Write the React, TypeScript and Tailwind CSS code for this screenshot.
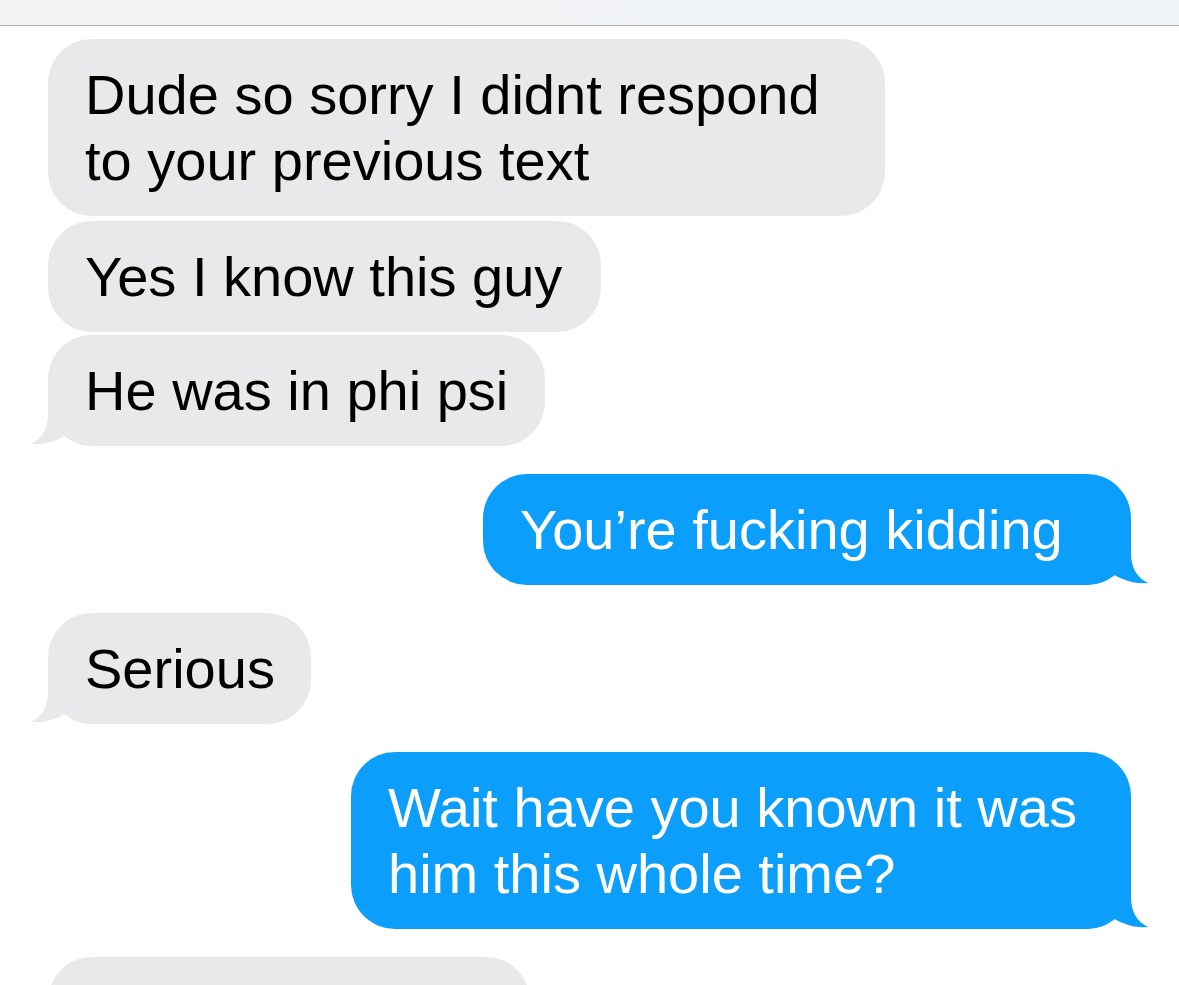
type Msg = { text: string[]; me?: boolean; w: string; mt: string; tail?: boolean };

const msgs: Msg[] = [
  { text: ['Dude so sorry I didnt respond', 'to your previous text'], w: 'w-[837px]', mt: 'mt-[13px]' },
  { text: ['Yes I know this guy'], w: 'w-[553px]', mt: 'mt-[5px]' },
  { text: ['He was in phi psi'], w: 'w-[497px]', mt: 'mt-[3px]', tail: true },
  { text: ['You\u2019re fucking kidding'], me: true, w: 'w-[648px]', mt: 'mt-[28px]', tail: true },
  { text: ['Serious'], w: 'w-[263px]', mt: 'mt-[28px]', tail: true },
  { text: ['Wait have you known it was', 'him this whole time?'], me: true, w: 'w-[780px]', mt: 'mt-[28px]', tail: true },
  { text: ['\u00a0'], w: 'w-[482px]', mt: 'mt-[28px]' },
];

function Tail({ me }: { me?: boolean }) {
  return (
    <svg
      viewBox="0 0 80 50"
      className={
        me
          ? 'absolute bottom-0 right-[-17px] w-[80px] h-[50px] -scale-x-100 fill-[#0b9efb]'
          : 'absolute bottom-0 left-[-17px] w-[80px] h-[50px] fill-[#e9e9eb]'
      }
    >
      <path d="M17 0 L17 18 C17 32 12 42 0 48 C14 49.5 28 44 37 38 C44 46 52 50 66 50 L80 50 L80 0 Z" />
    </svg>
  );
}

export default function App() {
  return (
    <div className="h-[985px] overflow-hidden bg-white font-['Liberation_Sans',Arial,sans-serif]">
      <div className="h-[26px] bg-gradient-to-r from-[#f3f4f5] to-[#f1f5f8] border-b border-[#b3b3b3]" />
      <div className="flex flex-col px-[48px]">
        {msgs.map((m, i) => (
          <div
            key={i}
            className={`relative ${m.w} ${m.mt} ${m.me ? 'self-end bg-[#0b9efb] text-white' : 'self-start bg-[#e9e9eb] text-black'} rounded-[44px] px-[37px] py-[22.5px] text-[56px] leading-[66px]`}
          >
            {m.tail && <Tail me={m.me} />}
            <div className="relative">
              {m.text.map((t, j) => (
                <div key={j} className="whitespace-nowrap">{t}</div>
              ))}
            </div>
          </div>
        ))}
      </div>
    </div>
  );
}
